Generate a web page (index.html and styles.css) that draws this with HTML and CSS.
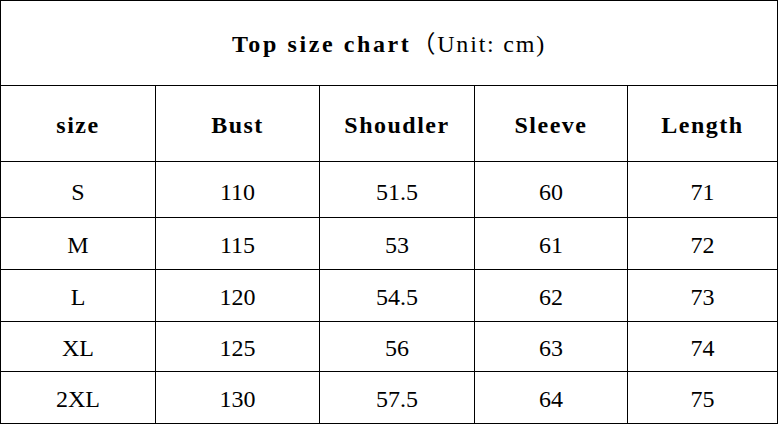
FILE: index.html
```html
<!DOCTYPE html>
<html>
<head>
<meta charset="utf-8">
<link rel="stylesheet" href="styles.css">
</head>
<body>
<table class="chart">
  <colgroup>
    <col class="c1"><col class="c2"><col class="c3"><col class="c4"><col class="c5">
  </colgroup>
  <tr class="title-row">
    <td colspan="5"><span class="title-b">Top size chart</span><span class="title-n">（Unit: cm)</span></td>
  </tr>
  <tr class="head-row">
    <th>size</th><th>Bust</th><th>Shoudler</th><th>Sleeve</th><th>Length</th>
  </tr>
  <tr class="r1"><td>S</td><td>110</td><td>51.5</td><td>60</td><td>71</td></tr>
  <tr class="r2"><td>M</td><td>115</td><td>53</td><td>61</td><td>72</td></tr>
  <tr class="r3"><td>L</td><td>120</td><td>54.5</td><td>62</td><td>73</td></tr>
  <tr class="r4"><td>XL</td><td>125</td><td>56</td><td>63</td><td>74</td></tr>
  <tr class="r5"><td>2XL</td><td>130</td><td>57.5</td><td>64</td><td>75</td></tr>
</table>
</body>
</html>
```
FILE: styles.css
```css
html, body {
  margin: 0;
  padding: 0;
  background: #fff;
}
.chart {
  border-collapse: collapse;
  table-layout: fixed;
  width: 777px;
  font-family: "Liberation Serif", "Noto Sans CJK SC", serif;
  color: #000;
}
.c1 { width: 155px; }
.c2 { width: 164px; }
.c3 { width: 155px; }
.c4 { width: 153px; }
.c5 { width: 150px; }
.chart td, .chart th {
  border: 1.5px solid #000;
  text-align: center;
  vertical-align: middle;
  padding: 0;
  font-size: 24px;
  line-height: 24px;
  font-weight: normal;
}
.title-row td { height: 82px; padding-top: 2px; }
.head-row th { height: 73px; font-weight: bold; letter-spacing: 1.5px; padding-top: 2px; }
.r1 td { height: 51px; padding-top: 4px; }
.r2 td, .r3 td { height: 48px; padding-top: 3px; }
.r4 td { height: 46px; padding-top: 3px; }
.r5 td { height: 48px; padding-top: 3px; }
.title-b { font-weight: bold; letter-spacing: 2.6px; }
.title-n { font-weight: normal; letter-spacing: 1.8px; }
```
